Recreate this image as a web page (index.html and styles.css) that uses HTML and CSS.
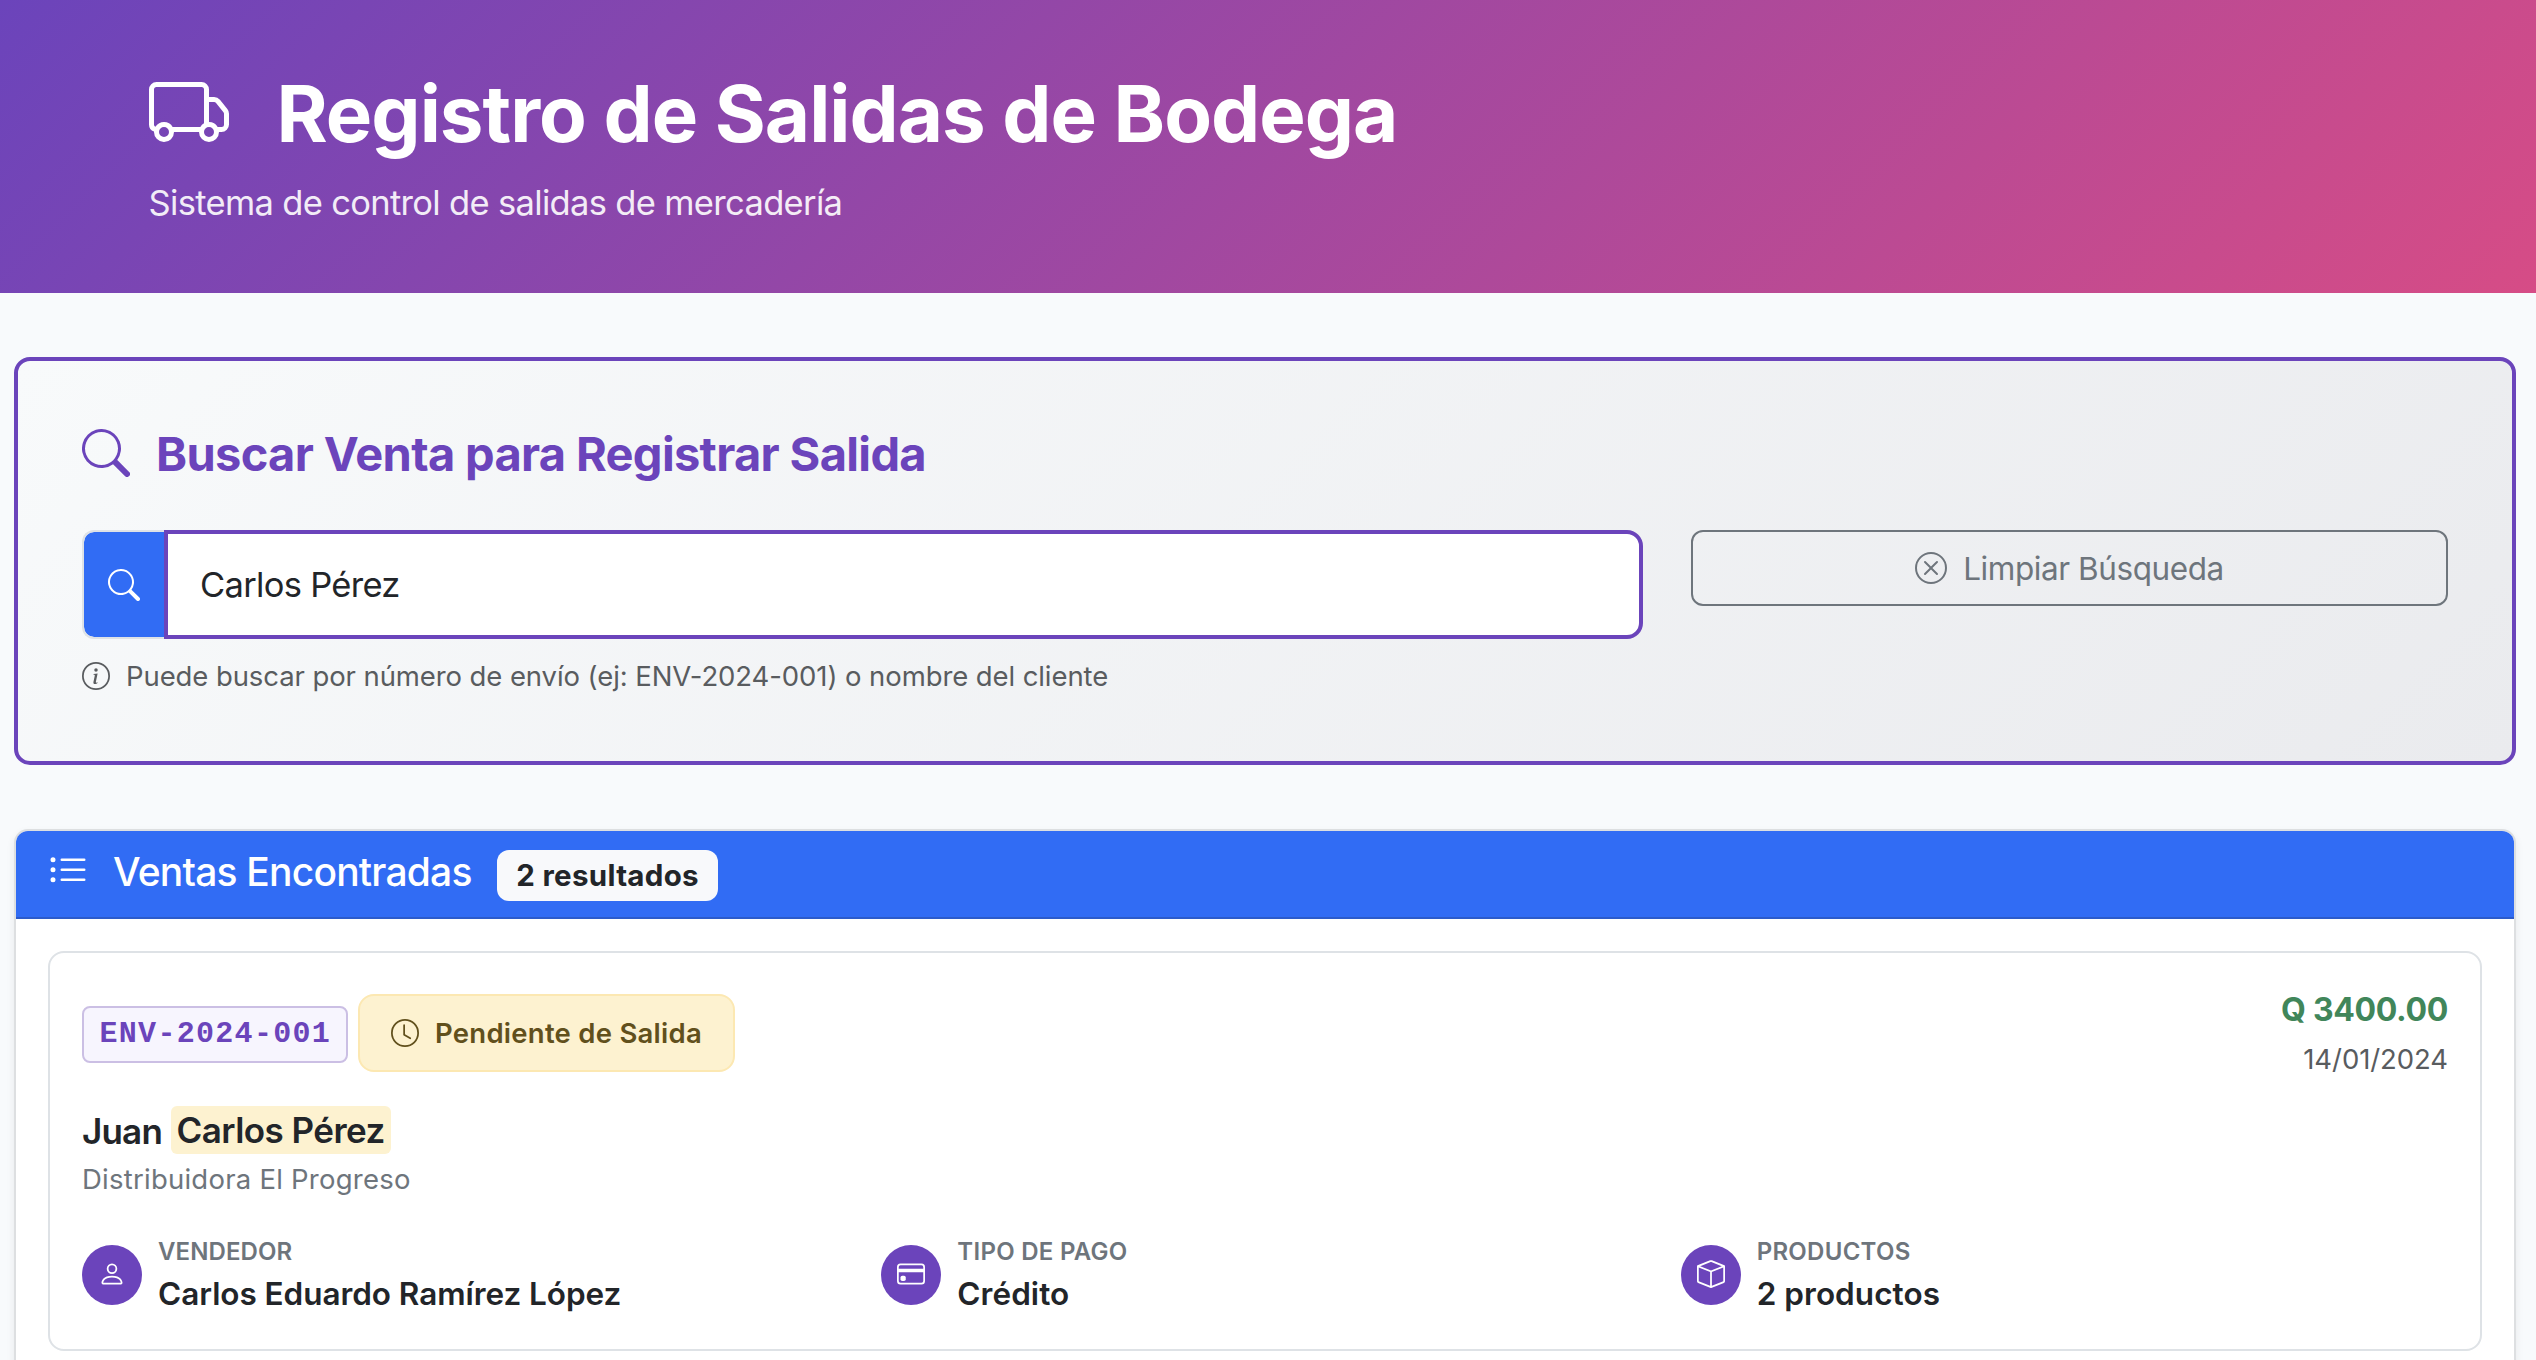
FILE: index.html
```html
<!DOCTYPE html>
<html lang="es">
<head>
<meta charset="utf-8">
<title>Registro de Salidas de Bodega</title>
<link rel="stylesheet" href="styles.css">
</head>
<body>
<header class="hero">
  <h1 class="hero-title">
    <svg class="icon icon-80" viewBox="0 0 16 16"><path d="M0 3.5A1.5 1.5 0 0 1 1.5 2h9A1.5 1.5 0 0 1 12 3.5V5h1.02a1.5 1.5 0 0 1 1.17.563l1.481 1.85a1.5 1.5 0 0 1 .329.938V10.5a1.5 1.5 0 0 1-1.5 1.5H14a2 2 0 1 1-4 0H5a2 2 0 1 1-3.998-.085A1.5 1.5 0 0 1 0 10.5zm1.294 7.456A2 2 0 0 1 4.732 11h5.536a2 2 0 0 1 .732-.732V3.5a.5.5 0 0 0-.5-.5h-9a.5.5 0 0 0-.5.5v7a.5.5 0 0 0 .294.456M12 10a2 2 0 0 1 1.732 1h.768a.5.5 0 0 0 .5-.5V8.35a.5.5 0 0 0-.11-.312l-1.48-1.85A.5.5 0 0 0 13.02 6H12zm-9 1a1 1 0 1 0 0 2 1 1 0 0 0 0-2m9 0a1 1 0 1 0 0 2 1 1 0 0 0 0-2"/></svg>
    <span>Registro de Salidas de Bodega</span>
  </h1>
  <p class="hero-subtitle">Sistema de control de salidas de mercadería</p>
</header>

<main class="page">
  <section class="search-card">
    <h2 class="search-title">
      <svg class="icon icon-48" viewBox="0 0 16 16"><path d="M11.742 10.344a6.5 6.5 0 1 0-1.397 1.398h-.001q.044.06.098.115l3.85 3.85a1 1 0 0 0 1.415-1.414l-3.85-3.85a1 1 0 0 0-.115-.1zM12 6.5a5.5 5.5 0 1 1-11 0 5.5 5.5 0 0 1 11 0"/></svg>
      <span>Buscar Venta para Registrar Salida</span>
    </h2>
    <div class="search-row">
      <div class="search-field">
        <div class="input-group">
          <span class="input-addon"><svg class="icon icon-32" viewBox="0 0 16 16"><path d="M11.742 10.344a6.5 6.5 0 1 0-1.397 1.398h-.001q.044.06.098.115l3.85 3.85a1 1 0 0 0 1.415-1.414l-3.85-3.85a1 1 0 0 0-.115-.1zM12 6.5a5.5 5.5 0 1 1-11 0 5.5 5.5 0 0 1 11 0"/></svg></span>
          <input class="search-input" type="text" value="Carlos Pérez">
        </div>
        <div class="help">
          <svg class="icon icon-28" viewBox="0 0 16 16"><path d="M8 15A7 7 0 1 1 8 1a7 7 0 0 1 0 14m0 1A8 8 0 1 0 8 0a8 8 0 0 0 0 16"/><path d="m8.93 6.588-2.29.287-.082.38.45.083c.294.07.352.176.288.469l-.738 3.468c-.194.897.105 1.319.808 1.319.545 0 1.178-.252 1.465-.598l.088-.416c-.2.176-.492.246-.686.246-.275 0-.375-.193-.304-.533zM9 4.5a1 1 0 1 1-2 0 1 1 0 0 1 2 0"/></svg>
          <span>Puede buscar por número de envío (ej: ENV-2024-001) o nombre del cliente</span>
        </div>
      </div>
      <button class="clear-button" type="button">
        <svg class="icon icon-32" viewBox="0 0 16 16"><path d="M8 15A7 7 0 1 1 8 1a7 7 0 0 1 0 14m0 1A8 8 0 1 0 8 0a8 8 0 0 0 0 16"/><path d="M4.646 4.646a.5.5 0 0 1 .708 0L8 7.293l2.646-2.647a.5.5 0 0 1 .708.708L8.707 8l2.647 2.646a.5.5 0 0 1-.708.708L8 8.707l-2.646 2.647a.5.5 0 0 1-.708-.708L7.293 8 4.646 5.354a.5.5 0 0 1 0-.708"/></svg>
        <span>Limpiar Búsqueda</span>
      </button>
    </div>
  </section>

  <section class="results">
    <div class="results-header">
      <svg class="icon icon-40" viewBox="0 0 16 16"><path d="M5 11.5a.5.5 0 0 1 .5-.5h9a.5.5 0 0 1 0 1h-9a.5.5 0 0 1-.5-.5m0-4a.5.5 0 0 1 .5-.5h9a.5.5 0 0 1 0 1h-9a.5.5 0 0 1-.5-.5m0-4a.5.5 0 0 1 .5-.5h9a.5.5 0 0 1 0 1h-9a.5.5 0 0 1-.5-.5m-3 1a1 1 0 1 0 0-2 1 1 0 0 0 0 2m0 4a1 1 0 1 0 0-2 1 1 0 0 0 0 2m0 4a1 1 0 1 0 0-2 1 1 0 0 0 0 2"/></svg>
      <h3 class="results-title">Ventas Encontradas</h3>
      <span class="count">2 resultados</span>
    </div>
    <div class="results-body">
      <article class="sale">
        <div class="sale-top">
          <div class="tags">
            <span class="code">ENV-2024-001</span>
            <span class="status">
              <svg class="icon icon-28" viewBox="0 0 16 16"><path d="M8 3.5a.5.5 0 0 0-1 0V9a.5.5 0 0 0 .252.434l3.5 2a.5.5 0 0 0 .496-.868L8 8.71z"/><path d="M8 16A8 8 0 1 0 8 0a8 8 0 0 0 0 16m7-8A7 7 0 1 1 1 8a7 7 0 0 1 14 0"/></svg>
              <span>Pendiente de Salida</span>
            </span>
          </div>
          <div class="totals">
            <div class="amount">Q 3400.00</div>
            <div class="date">14/01/2024</div>
          </div>
        </div>
        <div class="client"><span>Juan</span><mark class="match">Carlos Pérez</mark></div>
        <div class="company">Distribuidora El Progreso</div>
        <div class="details">
          <div class="detail">
            <span class="bullet"><svg class="icon icon-28" viewBox="0 0 16 16"><path d="M8 8a3 3 0 1 0 0-6 3 3 0 0 0 0 6m2-3a2 2 0 1 1-4 0 2 2 0 0 1 4 0m4 8c0 1-1 1-1 1H3s-1 0-1-1 1-4 6-4 6 3 6 4m-1-.004c-.001-.246-.154-.986-.832-1.664C11.516 10.68 10.289 10 8 10s-3.516.68-4.168 1.332c-.678.678-.83 1.418-.832 1.664z"/></svg></span>
            <div><div class="label label-tight">VENDEDOR</div><div class="value value-long">Carlos Eduardo Ramírez López</div></div>
          </div>
          <div class="detail">
            <span class="bullet"><svg class="icon icon-28" viewBox="0 0 16 16"><path d="M0 4a2 2 0 0 1 2-2h12a2 2 0 0 1 2 2v8a2 2 0 0 1-2 2H2a2 2 0 0 1-2-2zm2-1a1 1 0 0 0-1 1v1h14V4a1 1 0 0 0-1-1zm13 4H1v5a1 1 0 0 0 1 1h12a1 1 0 0 0 1-1z"/><path d="M2 10a1 1 0 0 1 1-1h1a1 1 0 0 1 1 1v1a1 1 0 0 1-1 1H3a1 1 0 0 1-1-1z"/></svg></span>
            <div><div class="label">TIPO DE PAGO</div><div class="value">Crédito</div></div>
          </div>
          <div class="detail">
            <span class="bullet"><svg class="icon icon-28" viewBox="0 0 16 16"><path d="M8.186 1.113a.5.5 0 0 0-.372 0L1.846 3.5 8 5.961 14.154 3.5zM15 4.239l-6.5 2.6v7.922l6.5-2.6V4.24zM7.5 14.762V6.838L1 4.239v7.923zM7.443.184a1.5 1.5 0 0 1 1.114 0l7.129 2.852A.5.5 0 0 1 16 3.5v8.662a1 1 0 0 1-.629.928l-7.185 2.874a.5.5 0 0 1-.372 0L.63 13.09a1 1 0 0 1-.63-.928V3.5a.5.5 0 0 1 .314-.464z"/></svg></span>
            <div><div class="label">PRODUCTOS</div><div class="value">2 productos</div></div>
          </div>
        </div>
      </article>
    </div>
  </section>
</main>
</body>
</html>
```
FILE: styles.css
```css
:root {
  --purple: #6b44bb;
  --blue: #316cf4;
  --muted: #6e757c;
  --ink: #222529;
  --line: #dee2e6;
}

* { box-sizing: border-box; }

body {
  margin: 0;
  height: 1360px;
  overflow: hidden;
  background: #f8fafc;
  color: var(--ink);
  font-family: Inter, "Liberation Sans", sans-serif;
}

h1, h2, h3, p { margin: 0; }

.icon { display: block; flex: none; fill: currentColor; }
.icon-28 { width: 28px; height: 28px; }
.icon-32 { width: 32px; height: 32px; }
.icon-40 { width: 40px; height: 40px; }
.icon-48 { width: 48px; height: 48px; }
.icon-80 { width: 80px; height: 80px; }

/* Page banner */
.hero {
  height: 293px;
  padding: 64px 148.5px;
  background: linear-gradient(135deg, #6b44bb 0%, #d64c86 100%);
  color: #fff;
}
.hero-title {
  display: flex;
  gap: 48px;
  margin-bottom: 13px;
  font-size: 78px;
  font-weight: 700;
  line-height: 99px;
  letter-spacing: -0.957px;
}
.hero-title .icon { margin-top: 8px; }
.hero-subtitle {
  font-size: 34.5px;
  line-height: 53px;
  letter-spacing: -0.667px;
  opacity: .9;
}

.page {
  display: flex;
  flex-direction: column;
  gap: 64px;
  padding: 64px 20px 0 14px;
}

/* Search panel */
.search-card {
  padding: 64px;
  border: 4px solid var(--purple);
  border-radius: 16px;
  background: linear-gradient(135deg, #f8fafb 0%, #eaebee 100%);
}
.search-title {
  display: flex;
  gap: 26px;
  margin-bottom: 47px;
  color: var(--purple);
  font-size: 47px;
  font-weight: 700;
  line-height: 58px;
  letter-spacing: -0.67px;
}
.search-title .icon { margin-top: 4px; }
.search-row {
  display: flex;
  align-items: flex-start;
  gap: 48px;
}
.search-field { flex: 0 0 1561px; }
.input-group { display: flex; height: 109px; }
.input-addon {
  display: flex;
  align-items: center;
  width: 82px;
  padding-left: 24px;
  border: 2px solid var(--line);
  border-right: 0;
  border-radius: 12px 0 0 12px;
  background: var(--blue);
  background-clip: padding-box;
  color: #fff;
}
.search-input {
  flex: 1;
  min-width: 0;
  padding: 0 32px;
  border: 4px solid var(--purple);
  border-radius: 0 16px 16px 0;
  outline: 0;
  background: #fff;
  color: var(--ink);
  font: 400 34.5px Inter, "Liberation Sans", sans-serif;
  letter-spacing: -0.7px;
}
.help {
  display: flex;
  align-items: center;
  gap: 16px;
  height: 42px;
  margin-top: 16px;
  color: #595c5f;
  font-size: 27.5px;
  letter-spacing: -0.09px;
  white-space: nowrap;
}
.clear-button {
  display: flex;
  flex: 1;
  align-items: center;
  justify-content: center;
  gap: 16px;
  height: 76px;
  padding: 0;
  border: 2px solid var(--muted);
  border-radius: 12px;
  background: transparent;
  color: var(--muted);
  font: 400 31.5px Inter, "Liberation Sans", sans-serif;
  letter-spacing: -0.432px;
}

/* Results list */
.results {
  border: 2px solid #dddfe1;
  border-radius: 14px;
  background: #fff;
  box-shadow: 0 4px 8px rgba(0, 0, 0, .075);
}
.results-header {
  display: flex;
  align-items: flex-start;
  height: 88px;
  padding: 16px 32px 0;
  border-bottom: 2px solid #2c5bca;
  border-radius: 12px 12px 0 0;
  background: var(--blue);
  color: #fff;
}
.results-header .icon { margin-top: 4px; }
.results-title {
  margin-left: 25px;
  font-size: 39px;
  font-weight: 500;
  line-height: 50px;
  letter-spacing: -0.8px;
}
.count {
  display: flex;
  align-items: center;
  justify-content: center;
  width: 221px;
  height: 51px;
  margin: 3px 0 0 25px;
  padding: 0 0 2px 1px;
  border-radius: 12px;
  background: #f8f9fb;
  color: var(--ink);
  font-size: 29.5px;
  font-weight: 700;
  letter-spacing: .29px;
}
.results-body { padding: 32px 32px 64px; }

.sale {
  padding: 32px;
  border: 2px solid var(--line);
  border-radius: 16px;
}
.sale-top {
  display: flex;
  justify-content: space-between;
  height: 121px;
}
.tags {
  display: flex;
  align-items: center;
  gap: 9.5px;
  height: 78px;
  margin-top: 9px;
}
.code {
  width: 266px;
  height: 57px;
  margin-top: 3px;
  padding: 0 0 0 15.5px;
  border: 2px solid #cbbfe4;
  border-radius: 8px;
  background: #f7f5fe;
  color: var(--purple);
  font: 700 30px/53px "Liberation Mono", monospace;
  letter-spacing: 1.3px;
}
.status {
  display: flex;
  align-items: center;
  gap: 16px;
  height: 78px;
  padding: 0 31px 0 31.5px;
  border: 2px solid #fce8b2;
  border-radius: 16px;
  background: #fdf2d0;
  color: #61501c;
  font-size: 27.5px;
  font-weight: 600;
  letter-spacing: .26px;
}
.totals { text-align: right; }
.amount {
  color: #41865a;
  font-size: 32px;
  font-weight: 700;
  line-height: 49px;
  letter-spacing: -0.33px;
}
.date {
  margin-top: 4px;
  color: #595c5f;
  font-size: 27.5px;
  line-height: 42px;
  letter-spacing: -0.08px;
}
.client {
  display: flex;
  gap: 9px;
  font-size: 35px;
  font-weight: 600;
  line-height: 50px;
  letter-spacing: -0.805px;
}
.match {
  height: 48px;
  padding: 0 6px 0 5.5px;
  border-radius: 6px;
  background: #fdf2d0;
  color: inherit;
  line-height: 49px;
  letter-spacing: -0.54px;
}
.company {
  margin-top: 2px;
  color: var(--muted);
  font-size: 27.5px;
  line-height: 42px;
  letter-spacing: .239px;
}
.details {
  display: grid;
  grid-template-columns: repeat(3, 1fr);
  gap: 32px;
  margin-top: 33px;
}
.detail {
  display: flex;
  align-items: flex-start;
  gap: 16px;
}
.bullet {
  display: flex;
  justify-content: center;
  flex: none;
  width: 60px;
  height: 60px;
  margin-top: 12px;
  padding-top: 15px;
  border-radius: 50%;
  background: var(--purple);
  color: #fff;
}
.label {
  padding-top: 1px;
  color: var(--muted);
  font-size: 24px;
  font-weight: 600;
  line-height: 36px;
  letter-spacing: .28px;
}
.label-tight { letter-spacing: .1px; }
.value {
  font-size: 31.5px;
  font-weight: 600;
  line-height: 47px;
  letter-spacing: .05px;
}
.value-long { letter-spacing: -0.055px; }
```
